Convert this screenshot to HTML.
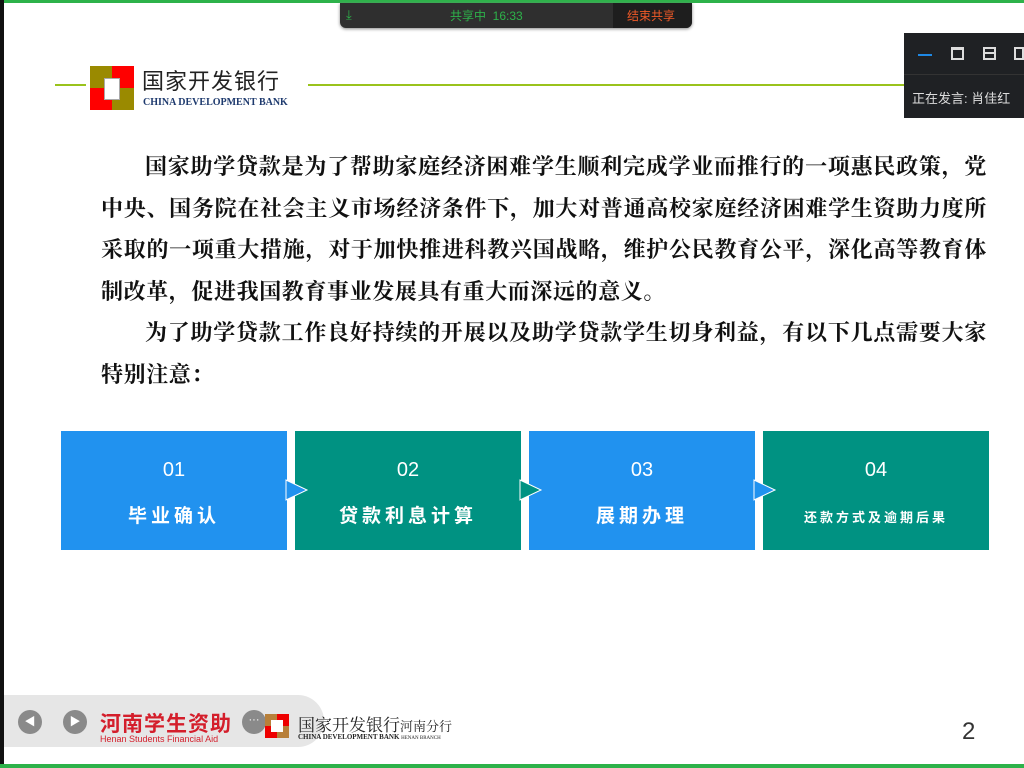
<!DOCTYPE html>
<html><head><meta charset="utf-8"><style>
*{margin:0;padding:0;box-sizing:border-box}
body{width:1024px;height:768px;overflow:hidden;background:#fff;position:relative;font-family:"Liberation Sans","Noto Sans CJK SC",sans-serif}
.abs{position:absolute}
p.t{position:absolute;left:101px;width:886px;font-family:"Liberation Serif","Noto Serif CJK SC",serif;font-weight:bold;font-size:22px;line-height:41.6px;letter-spacing:0.6px;text-align:justify;text-indent:44px;color:#111}
.card{position:absolute;top:431px;width:226px;height:119px;color:#fff;text-align:center}
.card .n{position:absolute;top:28px;width:100%;font-size:20px}
.card .l{position:absolute;top:70px;width:100%;font-size:19px;font-weight:bold;letter-spacing:4px}
.b{background:#2192ef}.g{background:#009282}
</style></head><body>
<div class="abs" style="left:0;top:0;width:1024px;height:3px;background:#2db24a"></div>
<div class="abs" style="left:0;top:764px;width:1024px;height:4px;background:#2db24a"></div>
<div class="abs" style="left:0;top:0;width:4px;height:764px;background:#111"></div>
<!-- share bar -->
<div class="abs" style="left:340px;top:3px;width:352px;height:25px;background:#2f2f2f;border-radius:0 0 6px 6px;box-shadow:0 1px 3px #888"></div>
<div class="abs" style="left:346px;top:7px;color:#2db24a;font-size:13px">⤓</div>
<div class="abs" style="left:450px;top:7px;color:#2db24a;font-size:12px">共享中 &nbsp;16:33</div>
<div class="abs" style="left:613px;top:3px;width:79px;height:25px;background:#1e1e1e;border-radius:0 0 6px 0"></div>
<div class="abs" style="left:627px;top:7px;color:#f05a28;font-size:12px">结束共享</div>
<!-- header -->
<div class="abs" style="left:55px;top:84px;width:850px;height:2px;background:#9ac31c"></div>
<div class="abs" style="left:86px;top:62px;width:222px;height:50px;background:#fff"></div>
<div class="abs" style="left:90px;top:66px;width:44px;height:44px;background:#9a8a00"></div>
<div class="abs" style="left:112px;top:66px;width:22px;height:22px;background:#f00"></div>
<div class="abs" style="left:90px;top:88px;width:22px;height:22px;background:#f00"></div>
<div class="abs" style="left:104px;top:78px;width:16px;height:22px;background:#fff;border:1px solid #aaa"></div>
<div class="abs" style="left:142px;top:64px;font-size:22px;color:#222;letter-spacing:1px">国家开发银行</div>
<div class="abs" style="left:143px;top:97px;font-size:10px;color:#1e3a6e;font-family:'Liberation Serif',serif;font-weight:bold">CHINA DEVELOPMENT BANK</div>
<!-- video panel -->
<div class="abs" style="left:904px;top:33px;width:120px;height:85px;background:#1f2124"></div>
<div class="abs" style="left:918px;top:54px;width:14px;height:2px;background:#1e88e5"></div>
<div class="abs" style="left:951px;top:47px;width:13px;height:13px;border:2px solid #ddd;border-top-width:3px"></div>
<div class="abs" style="left:983px;top:47px;width:13px;height:13px;border:2px solid #ddd"><div style="margin-top:3px;height:2px;background:#ddd"></div></div>
<div class="abs" style="left:1014px;top:47px;width:10px;height:13px;border:2px solid #ddd"></div>
<div class="abs" style="left:904px;top:74px;width:120px;height:1px;background:#333"></div>
<div class="abs" style="left:912px;top:88px;font-size:13px;color:#ddd;white-space:nowrap">正在发言: 肖佳红</div>
<!-- text -->
<p class="t" style="top:146px">国家助学贷款是为了帮助家庭经济困难学生顺利完成学业而推行的一项惠民政策，党中央、国务院在社会主义市场经济条件下，加大对普通高校家庭经济困难学生资助力度所采取的一项重大措施，对于加快推进科教兴国战略，维护公民教育公平，深化高等教育体制改革，促进我国教育事业发展具有重大而深远的意义。</p>
<p class="t" style="top:312px">为了助学贷款工作良好持续的开展以及助学贷款学生切身利益，有以下几点需要大家特别注意：</p>
<!-- cards -->
<div class="card b" style="left:61px"><div class="n">01</div><div class="l">毕业确认</div></div>
<div class="card g" style="left:295px"><div class="n">02</div><div class="l">贷款利息计算</div></div>
<div class="card b" style="left:529px"><div class="n">03</div><div class="l">展期办理</div></div>
<div class="card g" style="left:763px"><div class="n">04</div><div class="l" style="font-size:13px;top:76px;letter-spacing:3px">还款方式及逾期后果</div></div>
<svg class="abs" style="left:0;top:0" width="1024" height="768">
<polygon points="286,480 307,490 286,500" fill="#2192ef" stroke="#fff" stroke-width="1"/>
<polygon points="520,480 541,490 520,500" fill="#009282" stroke="#fff" stroke-width="1"/>
<polygon points="754,480 775,490 754,500" fill="#2192ef" stroke="#fff" stroke-width="1"/>
</svg>
<!-- bottom toolbar -->
<div class="abs" style="left:4px;top:695px;width:320px;height:52px;background:#e6e6e6;border-radius:0 26px 26px 0"></div>
<div class="abs" style="left:18px;top:710px;width:24px;height:24px;border-radius:50%;background:#8a8a8a;color:#fff;font-size:11px;text-align:center;line-height:24px">◀</div>
<div class="abs" style="left:63px;top:710px;width:24px;height:24px;border-radius:50%;background:#8a8a8a;color:#fff;font-size:11px;text-align:center;line-height:24px">▶</div>
<div class="abs" style="left:242px;top:710px;width:24px;height:24px;border-radius:50%;background:#8a8a8a;color:#fff;font-size:11px;text-align:center;line-height:20px">···</div>
<div class="abs" style="left:100px;top:708px;font-size:21px;font-weight:bold;color:#d41e2b;letter-spacing:1px">河南学生资助</div>
<div class="abs" style="left:100px;top:734px;font-size:9px;color:#d41e2b">Henan Students Financial Aid</div>
<div class="abs" style="left:265px;top:714px;width:24px;height:24px;background:#b8803a"></div>
<div class="abs" style="left:277px;top:714px;width:12px;height:12px;background:#e00"></div>
<div class="abs" style="left:265px;top:726px;width:12px;height:12px;background:#e00"></div>
<div class="abs" style="left:271px;top:720px;width:12px;height:12px;background:#fff"></div>
<div class="abs" style="left:298px;top:711px;font-size:17px;color:#222;font-family:'Liberation Serif','Noto Serif CJK SC',serif">国家开发银行<span style="font-size:13px">河南分行</span></div>
<div class="abs" style="left:298px;top:733px;font-size:7px;font-weight:bold;color:#222;font-family:'Liberation Serif',serif">CHINA DEVELOPMENT BANK <span style="font-weight:normal;font-size:5px">HENAN BRANCH</span></div>
<div class="abs" style="left:962px;top:718px;font-size:24px;color:#333">2</div>
</body></html>
